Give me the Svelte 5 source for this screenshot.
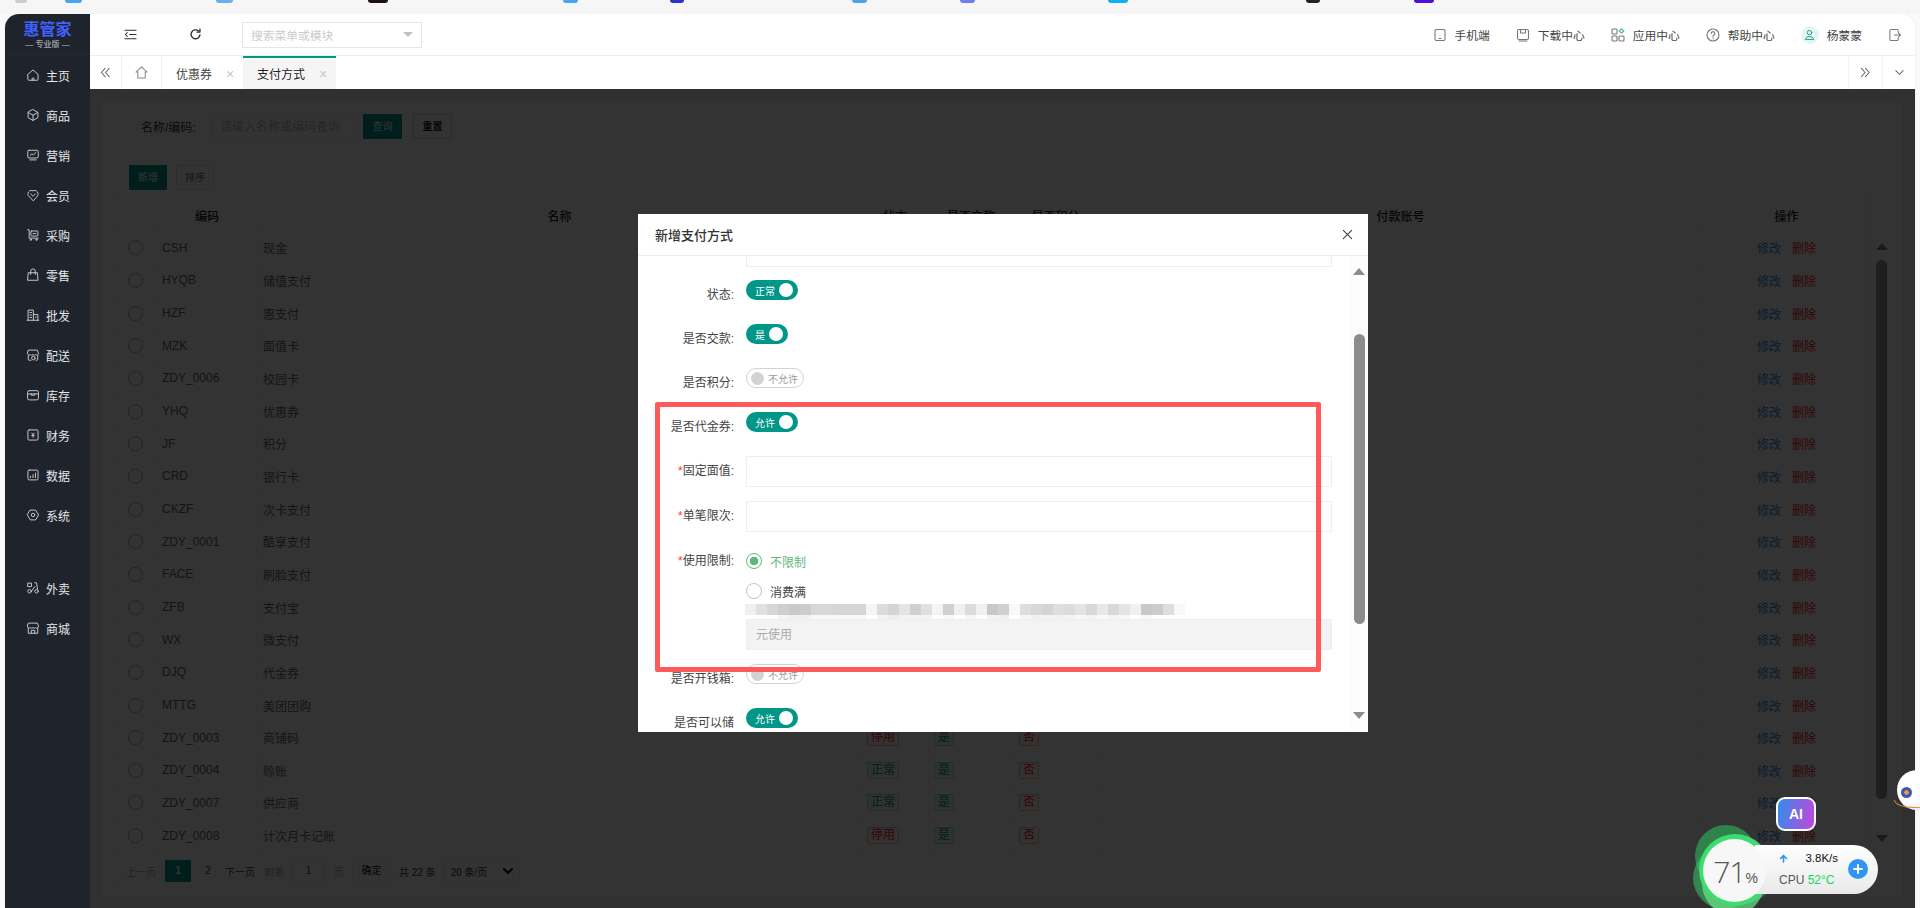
<script lang="ts">
  // Sidebar icons, drawn on a 16x16 box.
  const icons: Record<string, string> = {
    home: '<path d="M2.2 7.2 8 2.2l5.8 5V13a1 1 0 0 1-1 1H3.2a1 1 0 0 1-1-1z"/><path d="M7 14v-2.4h2V14"/>',
    box: '<path d="M8 1.8 13.6 5v6L8 14.2 2.4 11V5z"/><path d="M2.6 5.2 8 8.2l5.4-3M8 8.2v6"/>',
    chart: '<rect x="2" y="2.6" width="12" height="8.8" rx="1.4"/><path d="m4.6 8.6 2.2-2 1.6 1.2 2.8-2.6M4.4 13.6h7.2"/>',
    heart: '<path d="M8 14.4 2.6 8.6a3.6 3.6 0 0 1-.4-2.2C2.600 3.600 5 2 8 3.200 11 2 13.400 3.600 13.800 6.400a3.600 3.600 0 0 1-.4 2.200z"/><path d="m5.400 6.800 2.600 2.600 2.600-2.600"/>',
    cart: '<path d="M2 2h1.600v9.600H14"/><rect x="5.600" y="3.400" width="8" height="5.800" rx=".8"/><path d="M8 6.400h3.400"/><circle cx="5.400" cy="13.400" r=".8"/><circle cx="12" cy="13.400" r=".8"/>',
    bag: '<path d="M3 5.400h10l.8 8.600H2.200z"/><path d="M5.400 7.400V3.600a2.600 2.600 0 0 1 5.200 0v3.800"/>',
    city: '<path d="M2.400 14V2.400h6V14M8.400 7.400h5.200V14M1.400 14h13.200M4.400 5.200h2M4.400 8h2M4.400 10.800h2M10.600 10.400h1"/>',
    store: '<path d="M3 2.400h10l1.400 4a2 2 0 0 1-3.200 1.200 2.400 2.400 0 0 1-3.200 0 2.400 2.400 0 0 1-3.200 0A2 2 0 0 1 1.600 6.400z"/><path d="M2.600 8.400V13a1 1 0 0 0 1 1h2.200M13.400 8.400V13a1 1 0 0 1-1 1h-1"/><circle cx="8.400" cy="11.600" r="2"/>',
    stock: '<rect x="1.800" y="3" width="12.400" height="10.600" rx="2"/><path d="M1.800 6.800h12.400M6 6.800v1.400h4V6.800"/>',
    money: '<rect x="2.200" y="2.200" width="11.600" height="11.600" rx="1.400"/><path d="m6.600 5.800 1.400 1.600 1.400-1.600M8 7.400v3.200M6.600 8.600h2.800"/>',
    bars: '<rect x="2.200" y="2.400" width="11.600" height="11.200" rx="1.400"/><path d="M5.200 11V9.400M8 11V7.600M10.800 11V5.800"/>',
    gear: '<path d="M5 2.400h6L14.400 8 11 13.600H5L1.600 8z"/><circle cx="8" cy="8" r="2"/>',
    bike: '<circle cx="4" cy="11.800" r="2"/><circle cx="12" cy="11.800" r="2"/><path d="M2.400 2.400h3.800v4H2.400zM10 2h2l1.200 7.400M6.200 11.800 10 6.400"/>',
    shop: '<path d="M3 2.400h10l1.400 3.800a2 2 0 0 1-3.200 1.400 2.400 2.400 0 0 1-3.200 0 2.400 2.400 0 0 1-3.200 0 2 2 0 0 1-3.200-1.400z"/><path d="M2.600 8v6h10.800V8M6 14v-3.400h4V14"/>',
  };

  const menu = [
    { name: "主页", icon: "home" },
    { name: "商品", icon: "box" },
    { name: "营销", icon: "chart" },
    { name: "会员", icon: "heart" },
    { name: "采购", icon: "cart" },
    { name: "零售", icon: "bag" },
    { name: "批发", icon: "city" },
    { name: "配送", icon: "store" },
    { name: "库存", icon: "stock" },
    { name: "财务", icon: "money" },
    { name: "数据", icon: "bars" },
    { name: "系统", icon: "gear" },
  ];
  const extraMenu = [
    { name: "外卖", icon: "bike" },
    { name: "商城", icon: "shop" },
  ];

  const rows = [
    ["CSH", "现金", "正常", "是", "否"],
    ["HYQB", "储值支付", "正常", "是", "否"],
    ["HZF", "惠支付", "正常", "是", "否"],
    ["MZK", "面值卡", "正常", "是", "否"],
    ["ZDY_0006", "校园卡", "正常", "是", "否"],
    ["YHQ", "优惠券", "正常", "是", "否"],
    ["JF", "积分", "正常", "是", "否"],
    ["CRD", "银行卡", "正常", "是", "否"],
    ["CKZF", "次卡支付", "正常", "是", "否"],
    ["ZDY_0001", "酷享支付", "正常", "是", "否"],
    ["FACE", "刷脸支付", "正常", "是", "否"],
    ["ZFB", "支付宝", "正常", "是", "否"],
    ["WX", "微支付", "正常", "是", "否"],
    ["DJQ", "代金券", "正常", "是", "否"],
    ["MTTG", "美团团购", "正常", "是", "否"],
    ["ZDY_0003", "商铺码", "停用", "是", "否"],
    ["ZDY_0004", "赊账", "正常", "是", "否"],
    ["ZDY_0007", "供应商", "正常", "是", "否"],
    ["ZDY_0008", "计次月卡记账", "停用", "是", "否"],
  ];

  // Mosaic over the redacted hint, two rows of grey cells.
  const mosaicTop = ["f0","e0","d6","cf","c9","cc","d8","d8","d5","d5","d5","f5","dc","d4","e4","d0","e0","f4","d0","f0","dc","f0","c8","d0","f8","de","d8","d4","de","dc","e4","d8","e8","d8","e4","f0","c8","cc","de","f8"];
  const mosaicLow = ["ff","ff","ff","f4","f0","f0","f8","f8","f8","f8","f8","ff","f4","ee","f4","f4","f4","ff","f8","ff","f6","ff","f4","f0","ff","f6","f0","f4","f2","f4","f8","f4","f8","f4","f8","ff","f8","ff","ff","ff"];

  // Soft green lumps round the speed-ball.
  const blobs = [
    { x: 31, y: 30, r: 31, a: 0.6, c: "#2fb85c" },
    { x: 29, y: 52, r: 31, a: 0.55, c: "#38c868" },
    { x: 49, y: 46, r: 31, a: 0.5, c: "#38c868" },
    { x: 38, y: 58, r: 31, a: 0.7, c: "#6fe08a" },
    { x: 40, y: 44, r: 36, a: 1, c: "#3ddc70" },
  ];

  const crumbs = [
    { x: 15, w: 12, c: "#ccc" },
    { x: 65, w: 17, c: "#4aa3f0" },
    { x: 216, w: 17, c: "#6aaef0" },
    { x: 368, w: 20, c: "#1c1018" },
    { x: 563, w: 15, c: "#4aa3f0" },
    { x: 670, w: 14, c: "#2a35c8" },
    { x: 852, w: 15, c: "#4aa3f0" },
    { x: 960, w: 15, c: "#6a80f0" },
    { x: 1108, w: 20, c: "#12b0f0" },
    { x: 1306, w: 14, c: "#222" },
    { x: 1414, w: 20, c: "#4a12d8" },
  ];

  let limit = $state("none");
</script>

{#snippet toggle(text: string, on: boolean)}
  {#if on}
    <span class="switch on"><span>{text}</span><i></i></span>
  {:else}
    <span class="switch off"><i></i><span>{text}</span></span>
  {/if}
{/snippet}

<div class="page">
  <div class="browser-strip">
    {#each crumbs as c}
      <i class="crumb" style="left:{c.x}px;width:{c.w}px;background:{c.c}"></i>
    {/each}
  </div>

  <div class="app">
    <aside class="sidebar">
      <div class="logo">
        <strong>惠管家</strong>
        <small>— 专业版 —</small>
      </div>
      <nav>
        {#each menu as m}
          <div class="nav-item">
            <svg viewBox="0 0 16 16">{@html icons[m.icon]}</svg>
            <span>{m.name}</span>
          </div>
        {/each}
      </nav>
      <nav class="nav-extra">
        {#each extraMenu as m}
          <div class="nav-item">
            <svg viewBox="0 0 16 16">{@html icons[m.icon]}</svg>
            <span>{m.name}</span>
          </div>
        {/each}
      </nav>
    </aside>

    <main class="main">
      <header class="topbar">
        <button class="tool" aria-label="收起">
          <svg viewBox="0 0 14 14"><path d="M1 2.500h12M6 7h7M1 11.500h12M3.500 5 1.500 7l2 2"/></svg>
        </button>
        <button class="tool" aria-label="刷新">
          <svg viewBox="0 0 14 14" class="thick"><path d="M11.800 7.400A4.800 4.800 0 1 1 10.300 3.300"/><path d="M11.800 1.200v3.200H8.600" /></svg>
        </button>
        <div class="menu-search">
          <span>搜索菜单或模块</span>
          <i class="caret"></i>
        </div>
        <div class="top-links">
          <span class="top-link">
            <svg viewBox="0 0 14 14"><rect x="2" y="1.500" width="10" height="11" rx="1.500"/><path d="M6 10.500h2"/></svg>手机端
          </span>
          <span class="top-link">
            <svg viewBox="0 0 14 14"><rect x="1.500" y="1.500" width="11" height="10" rx="1.500"/><path d="M4.500 1.500v3.500h5V1.500M3 13h8"/></svg>下载中心
          </span>
          <span class="top-link">
            <svg viewBox="0 0 14 14"><rect x="1" y="1" width="5" height="5" rx="1"/><rect x="1" y="8" width="5" height="5" rx="1"/><rect x="8" y="8" width="5" height="5" rx="1"/><path class="teal" d="m10.500 .8 2.400 2.200-2.400 2.200L8.100 3z"/></svg>应用中心
          </span>
          <span class="top-link">
            <svg viewBox="0 0 14 14"><circle cx="7" cy="7" r="6"/><path d="M5.200 5.500a1.800 1.800 0 1 1 2.600 1.600c-.6.300-.8.700-.8 1.300M7 10v.6"/></svg>帮助中心
          </span>
          <span class="top-link user">
            <span class="avatar">
              <svg viewBox="0 0 14 14"><circle cx="7" cy="4.600" r="2.800"/><path d="M1.800 12.800c.6-2.200 2.400-3.200 5.200-3.200s4.600 1 5.200 3.200z"/></svg>
            </span>杨蒙蒙
          </span>
          <svg class="logout" viewBox="0 0 14 14"><path d="M11 4V2.500A1.500 1.500 0 0 0 9.500 1h-6A1.500 1.500 0 0 0 2 2.500v9A1.500 1.500 0 0 0 3.500 13h6a1.500 1.500 0 0 0 1.500-1.500V10M7 7h6.500M11.500 5l2 2-2 2"/></svg>
        </div>
      </header>

      <div class="tabbar">
        <button class="tab-side" aria-label="向左">
          <svg viewBox="0 0 12 12"><path d="M5.500 1.500 1.500 6l4 4.500M10 1.500 6 6l4 4.500"/></svg>
        </button>
        <button class="tab-home" aria-label="首页">
          <svg viewBox="0 0 14 14"><path d="M7 1 13 6.500h-2V13H3V6.500H1z"/></svg>
        </button>
        <div class="tab">优惠券<span class="x">×</span></div>
        <div class="tab active">支付方式<span class="x">×</span></div>
        <div class="tab-tools">
          <button class="tab-side" aria-label="向右">
            <svg viewBox="0 0 12 12"><path d="M1.500 1.500 5.500 6l-4 4.500M6 1.500 10 6l-4 4.500"/></svg>
          </button>
          <button class="tab-side last" aria-label="更多">
            <svg viewBox="0 0 12 12"><path d="M2 4l4 4 4-4"/></svg>
          </button>
        </div>
      </div>

      <section class="content">
        <div class="panel">
          <div class="search-row">
            <span class="search-label">名称/编码:</span>
            <span class="search-input">请输入名称或编码查询</span>
            <button class="btn primary">查询</button>
            <button class="btn ghost strong">重置</button>
          </div>

          <div class="table-card">
            <div class="toolbar">
              <button class="btn primary">新增</button>
              <button class="btn ghost">排序</button>
            </div>

            <div class="grid head">
              <div></div>
              <div class="center">编码</div>
              <div class="center">名称</div>
              <div class="center">状态</div>
              <div class="center">是否交款</div>
              <div class="center">是否积分</div>
              <div class="center">付款账号</div>
              <div class="center">操作</div>
            </div>
            {#each rows as r}
              <div class="grid row">
                <div class="center"><i class="row-radio"></i></div>
                <div class="cell">{r[0]}</div>
                <div class="cell">{r[1]}</div>
                <div class="cell"><span class="tag" class:green={r[2] === "正常"} class:red={r[2] !== "正常"}>{r[2]}</span></div>
                <div class="cell"><span class="tag green">{r[3]}</span></div>
                <div class="cell"><span class="tag red">{r[4]}</span></div>
                <div></div>
                <div class="center actions"><a href="#edit">修改</a><a href="#del" class="del">删除</a></div>
              </div>
            {/each}

            <div class="pager">
              <span class="faded">上一页</span>
              <span class="page-num current">1</span>
              <span class="page-num second">2</span>
              <span>下一页</span>
              <span class="faded jump">到第</span>
              <span class="page-input">1</span>
              <span class="faded">页</span>
              <span class="page-ok">确定</span>
              <span>共 22 条</span>
              <span class="page-size">20 条/页
                <svg viewBox="0 0 10 10"><path d="M1 3l4 4 4-4"/></svg>
              </span>
            </div>
          </div>
        </div>

        <div class="mask"></div>
        <div class="page-scroll">
          <i class="arrow up"></i>
          <i class="thumb"></i>
          <i class="arrow down"></i>
        </div>
      </section>
    </main>
  </div>

  <div class="dialog">
    <div class="dialog-head">
      <span>新增支付方式</span>
      <svg viewBox="0 0 12 12"><path d="M1.500 1.500l9 9M10.500 1.500l-9 9"/></svg>
    </div>
    <div class="dialog-body">
      <div class="form">
        <div class="input stub"></div>

        <div class="field toggle-field"><label>状态:</label>{@render toggle("正常", true)}</div>
        <div class="field toggle-field"><label>是否交款:</label>{@render toggle("是", true)}</div>
        <div class="field toggle-field"><label>是否积分:</label>{@render toggle("不允许", false)}</div>
        <div class="field toggle-field"><label>是否代金券:</label>{@render toggle("允许", true)}</div>

        <div class="field input-field"><label><em>*</em>固定面值:</label><div class="input"></div></div>
        <div class="field input-field"><label><em>*</em>单笔限次:</label><div class="input"></div></div>

        <div class="field limit-field">
          <label><em>*</em>使用限制:</label>
          <div class="limit">
            <button class="radio" class:checked={limit === "none"} onclick={() => (limit = "none")}><i></i>不限制</button>
            <button class="radio" class:checked={limit === "min"} onclick={() => (limit = "min")}><i></i>消费满</button>
            <div class="mosaic">
              <div class="mosaic-row">
                {#each mosaicTop as c}<i style="background:#{c}{c}{c}"></i>{/each}
              </div>
              <div class="mosaic-row low">
                {#each mosaicLow as c}<i style="background:#{c}{c}{c}"></i>{/each}
              </div>
            </div>
            <div class="input disabled">元使用</div>
          </div>
        </div>

        <div class="field toggle-field"><label>是否开钱箱:</label>{@render toggle("不允许", false)}</div>
        <div class="field toggle-field"><label>是否可以储</label>{@render toggle("允许", true)}</div>
      </div>

      <div class="dialog-scroll">
        <i class="arrow up"></i>
        <i class="thumb"></i>
        <i class="arrow down"></i>
      </div>
    </div>
    <div class="callout"></div>
  </div>

  <div class="ai-badge">AI</div>

  <div class="robot">
    <i class="ring"></i>
    <i class="eye"></i>
  </div>

  <div class="speed">
    {#each blobs as b}
      <i class="blob" style="left:{b.x - b.r}px;top:{b.y - b.r}px;width:{b.r * 2}px;height:{b.r * 2}px;opacity:{b.a};background:{b.c}"></i>
    {/each}
    <div class="pill">
      <div class="stats">
        <div class="net">
          <svg viewBox="0 0 10 10"><path d="M5 9V2M1.800 5 5 1.600 8.200 5"/></svg>
          <span>3.8K/s</span>
        </div>
        <div class="cpu">CPU <span>52°C</span></div>
      </div>
      <span class="plus">
        <svg viewBox="0 0 10 10"><path d="M5 1v8M1 5h8"/></svg>
      </span>
    </div>
    <div class="ball"><b>71</b><span>%</span></div>
  </div>
</div>

<style>
  :global(body) {
    margin: 0;
    background: #f6f6f6;
    font-family: "Liberation Sans", "Noto Sans CJK SC", sans-serif;
    font-size: 12px;
  }
  button { font: inherit; background: none; border: 0; padding: 0; cursor: pointer; }
  svg { display: block; fill: none; stroke: currentColor; stroke-width: 1.1; stroke-linecap: round; stroke-linejoin: round; }

  .page { position: relative; width: 1920px; height: 908px; overflow: hidden; background: #fafafa; display: flex; flex-direction: column; }

  .browser-strip { position: relative; height: 14px; flex: none; background: #f6f6f6; }
  .crumb { position: absolute; top: 0; height: 3px; border-radius: 0 0 3px 3px; }

  .app { flex: 1; min-height: 0; display: flex; margin: 0 5px; border-radius: 14px 14px 0 0; overflow: hidden; box-shadow: 0 0 2px rgba(0,0,0,.12); }

  /* ── Sidebar ── */
  .sidebar { width: 85px; flex: none; background: #1e232c; color: #e4e6ea; }
  .logo { height: 41px; box-sizing: border-box; display: flex; flex-direction: column; align-items: center; border-bottom: 1px solid #242933; }
  .logo strong { font-size: 16px; line-height: 17px; margin-top: 7px; color: #4060ff; font-weight: 700; }
  .logo small { font-size: 8px; line-height: 10px; margin-top: 2px; color: #8e939c; font-weight: 700; white-space: nowrap; }
  .nav-item { height: 40px; display: flex; align-items: center; gap: 6px; padding-left: 21px; }
  .nav-item svg { width: 14px; height: 14px; color: #c9ccd1; }
  .nav-item span { font-size: 12px; }
  .nav-extra { margin-top: 33px; }

  /* ── Top bar ── */
  .main { flex: 1; min-width: 0; display: flex; flex-direction: column; background: #fff; }
  .topbar { height: 42px; box-sizing: border-box; flex: none; display: flex; align-items: center; border-bottom: 1px solid #eee; padding-left: 8px; }
  .tool { width: 65px; height: 100%; display: flex; align-items: center; justify-content: center; color: #333; }
  .tool svg { width: 13px; height: 13px; }
  .tool .thick { stroke-width: 1.5; }
  .menu-search { margin-left: 14px; width: 180px; height: 26px; box-sizing: border-box; border: 1px solid #e6e6e6; display: flex; align-items: center; justify-content: space-between; padding: 0 8px 0 8px; color: #ccc; font-size: 11.75px; }
  .caret { width: 0; height: 0; border: 5px solid transparent; border-top: 5px solid #c2c2c2; border-bottom: 0; }
  .top-links { margin-left: auto; display: flex; align-items: center; gap: 26px; padding-right: 14px; color: #444; font-size: 11.75px; }
  .top-link { display: inline-flex; align-items: center; gap: 8px; white-space: nowrap; }
  .top-link svg { width: 14px; height: 14px; color: #777; }
  .top-link .teal { stroke: #4db6ac; }
  .avatar { width: 18px; height: 18px; border-radius: 50%; background: #e4f5f2; display: flex; align-items: center; justify-content: center; }
  .top-link .avatar svg { width: 11px; height: 11px; color: #009688; }
  .logout { width: 13px; height: 14px; color: #777; }

  /* ── Tabs ── */
  .tabbar { height: 33px; flex: none; display: flex; color: #444; }
  .tab-side { width: 32px; height: 100%; display: flex; align-items: center; justify-content: center; border-right: 1px solid #f2f2f2; color: #666; }
  .tab-side svg { width: 11px; height: 11px; }
  .tab-home { width: 40px; display: flex; align-items: center; justify-content: center; border-right: 1px solid #f2f2f2; color: #888; }
  .tab-home svg { width: 13px; height: 13px; }
  .tab { display: flex; align-items: center; gap: 13px; padding: 0 8px 0 14px; white-space: nowrap; border-top: 2px solid transparent; box-sizing: border-box; }
  .tab.active { background: #f5f5f5; border-top-color: #009688; color: #222; }
  .x { width: 10px; text-align: center; color: #c8c8c8; font-size: 14px; line-height: 1; }
  .tab-tools { margin-left: auto; display: flex; }
  .tab-tools .tab-side { border-right: 0; border-left: 1px solid #f2f2f2; width: 34px; }
  .tab-tools .last { width: 33px; }

  /* ── Page under the mask ── */
  .content { position: relative; flex: 1; min-height: 0; background: #f0f0f0; padding: 13px 12px 0; overflow: hidden; }
  .mask { position: absolute; inset: 0; background: rgba(0,0,0,.8); }
  .panel { background: #fff; height: 795px; padding: 0 12px; box-sizing: border-box; border: 1px solid #f6f6f6; }
  .search-row { display: flex; align-items: center; height: 44px; padding: 11px 0 8px 26px; box-sizing: border-box; color: #333; }
  .search-label { width: 70px; flex: none; }
  .search-input { width: 148px; height: 25px; box-sizing: border-box; border: 1px solid #eee; color: #bbb; padding-left: 8px; line-height: 24px; }
  .btn { height: 25px; width: 39px; box-sizing: border-box; font-size: 10px; line-height: 23px; text-align: center; border-radius: 1px; }
  .btn.primary { background: #009688; color: #fff; }
  .btn.ghost { border: 1px solid #e6e6e6; color: #777; }
  .btn.strong { color: #111; border-color: #d0d0d0; font-weight: 700; }
  .search-row .primary { margin-left: 4px; }
  .search-row .ghost { margin-left: 11px; }

  .table-card { border: 1px solid #f5f5f5; margin-top: 10px; width: 1756px; box-sizing: border-box; }
  .toolbar { display: flex; gap: 9px; padding: 7px 13px 9px; }
  .toolbar .btn { width: 38px; }
  .grid { display: grid; grid-template-columns: 41px 101px 604px 67px 85px 84px 606px 166px; border-top: 1px solid #f3f3f3; }
  .grid > div { border-right: 1px solid #f3f3f3; box-sizing: border-box; }
  .head { height: 32px; box-sizing: border-box; color: #222; font-weight: 500; }
  .row { height: 32.67px; color: #666; box-sizing: border-box; }
  .center { display: flex; align-items: center; justify-content: center; }
  .cell { display: flex; align-items: center; padding-left: 5px; }
  .row-radio { width: 15px; height: 15px; box-sizing: border-box; border: 1px solid #aaa; border-radius: 50%; margin-left: -1px; }
  .tag { height: 17px; line-height: 15px; box-sizing: border-box; padding: 0 3px; border: 1px solid; border-radius: 2px; font-size: 12px; }
  .tag.green { color: #0a9a7a; border-color: #a8dcd0; background: #f0faf7; }
  .tag.red { color: #f22; border-color: #ffb4b4; background: #fff6f6; }
  .actions { gap: 11px; }
  .actions a { color: #2f8ff0; text-decoration: none; }
  .actions a.del { color: #f22; }

  .pager { height: 36px; display: flex; align-items: center; padding: 3px 0 0 10px; box-sizing: border-box; color: #444; border-top: 1px solid #f3f3f3; white-space: nowrap; font-size: 10px; }
  .faded { color: #aaa; }
  .page-num { width: 26px; height: 22px; line-height: 22px; text-align: center; margin-left: 9px; border-radius: 1px; }
  .page-num.current { background: #009688; color: #fff; font-weight: 700; }
  .page-num.second { margin-left: 0; width: 34px; }
  .jump { margin-left: 9px; margin-right: 8px; }
  .page-input { width: 33px; height: 22px; line-height: 20px; text-align: center; border: 1px solid #f0f0f0; box-sizing: border-box; margin-right: 9px; }
  .page-ok { margin-left: 8px; margin-right: 8px; width: 39px; height: 22px; line-height: 20px; text-align: center; border: 1px solid #f0f0f0; box-sizing: border-box; color: #111; }
  .page-size { margin-left: 8px; width: 76px; height: 22px; box-sizing: border-box; border: 1px solid #f0f0f0; display: flex; align-items: center; justify-content: space-between; padding: 0 6px 0 6px; color: #333; }
  .page-size svg { width: 10px; height: 10px; stroke-width: 2; color: #000; }

  .page-scroll { position: absolute; left: 1785px; top: 154px; width: 13px; height: 600px; display: flex; flex-direction: column; align-items: center; }
  .page-scroll .thumb { background: #1e1e1e; margin: 10px 0 36px; height: 539px; }
  .page-scroll .arrow.up { border-bottom-color: #1b1b1b; }
  .page-scroll .arrow.down { border-top-color: #1b1b1b; }
  .thumb { display: block; width: 11px; border-radius: 6px; flex: none; }
  .arrow { display: block; width: 0; height: 0; flex: none; border-left: 6.5px solid transparent; border-right: 6.5px solid transparent; }
  .arrow.up { border-bottom: 7px solid #8c8c8c; }
  .arrow.down { border-top: 7px solid #8c8c8c; }

  /* ── Dialog ── */
  .dialog { position: absolute; left: 638px; top: 214px; width: 730px; height: 518px; background: #fff; display: flex; flex-direction: column; color: #444; }
  .dialog-head { height: 42px; box-sizing: border-box; flex: none; display: flex; align-items: center; justify-content: space-between; padding: 0 15px 0 17px; border-bottom: 1px solid #eee; font-size: 13px; color: #333; font-weight: 500; }
  .dialog-head svg { width: 11px; height: 11px; color: #444; stroke-width: 1.3; }
  .dialog-body { flex: 1; min-height: 0; display: flex; overflow: hidden; }
  .form { flex: 1; min-width: 0; display: flex; flex-direction: column; padding-right: 18px; }
  .input { height: 31px; flex: 1; box-sizing: border-box; border: 1px solid #eee; border-radius: 1px; }
  .input.stub { flex: none; margin: -20px 0 12px 108px; }
  .field { display: flex; flex: none; }
  .field label { width: 96px; margin-right: 12px; flex: none; height: 30px; line-height: 32px; text-align: right; color: #444; }
  .toggle-field label { line-height: 33px; }
  .field em { color: #f33; font-style: normal; }
  .toggle-field { height: 30px; margin-bottom: 14px; align-items: flex-start; }
  .input-field { height: 32px; margin-bottom: 13px; }
  .input-field .input { margin-top: 1px; }
  .limit-field { margin-bottom: 13px; }
  .limit { flex: 1; min-width: 0; display: flex; flex-direction: column; }
  .radio { display: flex; align-items: center; gap: 8px; height: 30px; text-align: left; color: #444; }
  .radio i { width: 16px; height: 16px; box-sizing: border-box; border: 1px solid #c2c2c2; border-radius: 50%; }
  .radio.checked { color: #5fb878; }
  .radio.checked i { border: 1.5px solid #5fb878; background: radial-gradient(circle, #5fb878 0 4px, transparent 4.5px); }
  .limit .radio:first-child { margin-top: 1px; }
  .mosaic { margin-left: -1px; margin-top: -2px; height: 17px; overflow: hidden; }
  .mosaic-row { display: flex; height: 11px; }
  .mosaic-row.low { height: 6px; }
  .mosaic-row i { display: block; width: 11px; flex: none; }
  .input.disabled { flex: none; background: #f3f3f3; color: #aaa; line-height: 31px; padding-left: 9px; margin-top: -2px; }

  .switch { display: inline-flex; align-items: center; height: 20px; box-sizing: border-box; border-radius: 10px; font-size: 10px; margin-top: 1px; white-space: nowrap; }
  .switch i { display: block; border-radius: 50%; }
  .switch.on { background: #009688; color: #fff; padding: 0 5px 0 9px; gap: 4px; }
  .switch.on i { width: 14px; height: 14px; background: #fff; }
  .switch.off { border: 1px solid #d2d2d2; color: #999; padding: 0 5px 0 4px; gap: 4px; }
  .switch.off i { width: 13px; height: 13px; background: #d2d2d2; }

  .dialog-scroll { width: 18px; flex: none; background: #fcfcfc; display: flex; flex-direction: column; align-items: center; padding-top: 12px; box-sizing: border-box; }
  .dialog-scroll .thumb { background: #8c8c8c; height: 290px; margin: 59px 0 88px; }

  .callout { position: absolute; left: 17px; top: 188px; width: 666px; height: 270px; box-sizing: border-box; border: 5px solid #ff5a5a; border-radius: 2px; pointer-events: none; }

  /* ── Floating widgets ── */
  .ai-badge { position: absolute; left: 1776px; top: 797px; width: 40px; height: 34px; box-sizing: border-box; border: 2px solid #fff; border-radius: 9px; background: linear-gradient(100deg, #2f8ee8, #c545dc); color: #fff; font-size: 14px; font-weight: 700; display: flex; align-items: center; justify-content: center; }

  .robot { position: absolute; left: 1897px; top: 770px; width: 40px; height: 40px; border-radius: 50%; background: radial-gradient(circle at 30% 30%, #fff 50%, #c9d6f2); }
  .eye { position: absolute; left: 4px; top: 17px; width: 11px; height: 11px; border-radius: 50%; background: radial-gradient(circle, #f19a3e 0 2px, #3f57b8 2.5px); }
  .ring { position: absolute; left: -3px; top: 22px; width: 40px; height: 16px; border: 1px solid #e58a30; border-radius: 50%; box-sizing: border-box; clip-path: inset(50% 0 0 0); }

  .speed { position: absolute; left: 1695px; top: 826px; width: 190px; height: 82px; }
  .blob { position: absolute; border-radius: 50%; }
  .ball { position: absolute; left: 8px; top: 13px; width: 63px; height: 63px; border-radius: 50%; background: #f7f7f7; display: flex; align-items: baseline; justify-content: center; padding: 15px 0 0 2px; box-sizing: border-box; color: #555; }
  .ball b { font-size: 30px; line-height: 36px; font-weight: 300; font-family: "Open Sans", sans-serif; letter-spacing: -1px; }
  .ball span { font-size: 14px; margin-left: 0; }
  .pill { position: absolute; left: 60px; top: 19px; width: 123px; height: 49px; border-radius: 0 25px 25px 0; background: linear-gradient(180deg, #fff, #e9e9e9); display: flex; align-items: flex-start; padding-left: 24px; box-sizing: border-box; }
  .stats { width: 59px; margin-top: 2px; }
  .net { display: flex; align-items: center; justify-content: space-between; color: #111; font-size: 11.5px; height: 22px; }
  .net svg { width: 9px; height: 9px; color: #2f95f5; stroke-width: 1.8; }
  .cpu { font-size: 12px; line-height: 14px; color: #556; margin-top: 4px; white-space: nowrap; }
  .cpu span { color: #12d868; }
  .plus { position: absolute; left: 93px; top: 14px; width: 20px; height: 20px; border-radius: 50%; background: #2f95f5; color: #fff; display: flex; align-items: center; justify-content: center; }
  .plus svg { width: 10px; height: 10px; stroke-width: 2; }
</style>
